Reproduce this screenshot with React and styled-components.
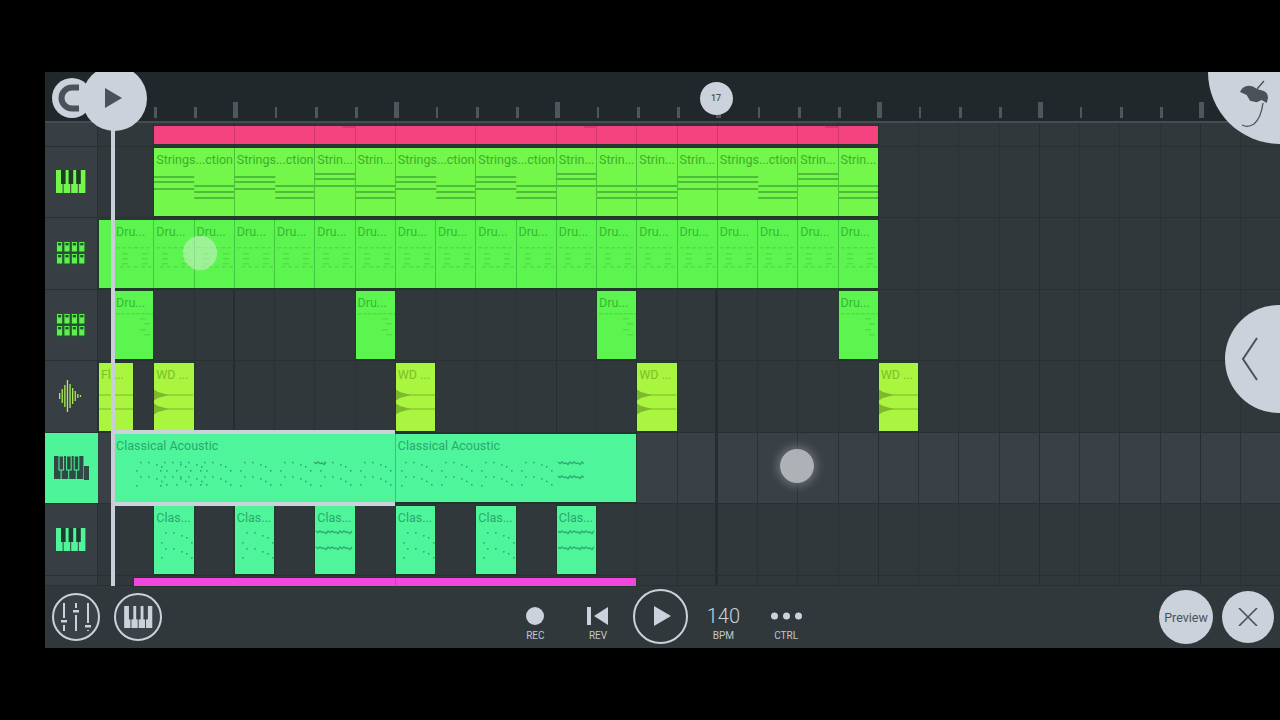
import React from 'react';
import styled, { createGlobalStyle } from 'styled-components';

const BEAT = 40.25;
const ORIGIN = 15;
const CHROME = '#cbd2db';
const INK = '#4a5158';

const GlobalStyle = createGlobalStyle`
  html, body {
    margin: 0;
    height: 100%;
    overflow: hidden;
    background: #000;
    font-family: Roboto, "Liberation Sans", sans-serif;
  }
`;

const Frame = styled.div`
  position: relative;
  display: flex;
  flex-direction: column;
  width: 1235px;
  height: 576px;
  margin: 72px 0 0 45px;
  overflow: hidden;
  background: #30383c;
`;

const Ruler = styled.header`
  display: flex;
  align-items: flex-end;
  box-sizing: border-box;
  height: 51px;
  padding: 0 0 3px 108px;
  background: #20282c;
  border-bottom: 2px solid #454d52;
`;

const Tick = styled.span`
  flex: 0 0 ${BEAT}px;
  display: block;
  &::before {
    content: '';
    display: block;
    width: ${p => (p.$major ? 5 : 2.5)}px;
    height: ${p => (p.$major ? 16 : 11)}px;
    margin-left: ${p => (p.$major ? -1 : 1)}px;
    background: #4f575c;
  }
`;

const Track = styled.section`
  display: flex;
  flex: 0 0 ${p => p.$height}px;
  height: ${p => p.$height}px;
  box-sizing: border-box;
  border-bottom: 1px solid #283034;
`;

const Cell = styled.div`
  flex: 0 0 53px;
  display: flex;
  align-items: center;
  justify-content: center;
  background: ${p => (p.$active ? '#4df598' : '#373f44')};
  border-right: ${p => (p.$active ? 0 : '1px solid #282f33')};
  box-sizing: border-box;
`;

const Lane = styled.div`
  position: relative;
  flex: 1;
  background-color: ${p => (p.$active ? '#394146' : '#30383c')};
  background-image:
    ${p => (p.$marked ? 'linear-gradient(#262d31, #262d31),' : '')}
    linear-gradient(#262d31, #262d31),
    linear-gradient(#2a3236, #2a3236);
  background-repeat: ${p => (p.$marked ? 'no-repeat, repeat-y, repeat-y' : 'repeat-y')};
  background-size: ${p => (p.$marked ? '2px 100%,' : '')} 1px 100%, 1px 100%;
  background-position: ${p => (p.$marked ? '617px 0,' : '')} 135px 0, ${ORIGIN}px 0;
  background-clip: border-box;
`;

const GridLine = styled.i`
  position: absolute;
  top: 0;
  bottom: 0;
  left: ${p => ORIGIN + p.$beat * BEAT}px;
  width: 1px;
  background: ${p => (p.$major ? '#262d31' : '#2a3236')};
`;

const Clip = styled.div`
  position: absolute;
  top: ${p => p.$top}px;
  left: ${p => ORIGIN + p.$at * BEAT}px;
  width: ${p => p.$len * BEAT}px;
  height: ${p => p.$height}px;
  box-sizing: border-box;
  overflow: hidden;
  z-index: ${p => (p.$selected ? 2 : 1)};
  background: ${p => p.$fill};
  border-left: 1px solid ${p => (p.$joined ? p.$seam : '#1f3a28')};
  box-shadow: ${p =>
    p.$selected ? `0 -4px 0 ${CHROME}, 0 4px 0 ${CHROME}` : '1px 0 0 #1f3a28, 0 1px 0 #1f3a28, 0 -1px 0 #1f3a28'};
  ${p => p.$selected && 'overflow: visible;'}
`;

const ClipName = styled.span`
  position: relative;
  display: block;
  padding: 5px 0 0 2px;
  font-size: 12.5px;
  line-height: 14px;
  white-space: nowrap;
  overflow: hidden;
  color: ${p => p.$color};
`;

const NotesArt = styled.svg`
  position: absolute;
  left: 0;
  top: 0;
  width: 100%;
  height: 100%;
`;

const Playhead = styled.div`
  position: absolute;
  left: 65.5px;
  top: 0;
  bottom: 62px;
  width: 4.5px;
  z-index: 5;
  background: #c8cfd8;
`;

const Knob = styled.button`
  position: absolute;
  z-index: 6;
  left: ${p => p.$x - p.$size / 2}px;
  top: ${p => p.$y - p.$size / 2}px;
  width: ${p => p.$size}px;
  height: ${p => p.$size}px;
  padding: 0;
  border: 0;
  border-radius: 50%;
  background: ${CHROME};
  color: ${INK};
  font: 500 9px Roboto, sans-serif;
  display: flex;
  align-items: center;
  justify-content: center;
`;

const KnobArt = styled.svg`
  position: absolute;
  left: 0;
  top: 0;
  width: 100%;
  height: 100%;
`;

const Touch = styled.span`
  position: absolute;
  z-index: 6;
  left: ${p => p.$x - 17}px;
  top: ${p => p.$y - 17}px;
  width: 34px;
  height: 34px;
  border-radius: 50%;
  background: ${p => (p.$glow ? 'rgba(200, 203, 208, 0.82)' : 'rgba(220, 240, 220, 0.5)')};
  box-shadow: ${p => (p.$glow ? '0 0 8px 3px rgba(210, 215, 220, 0.3)' : '0 0 2px rgba(255,255,255,.3)')};
`;

const Footer = styled.footer`
  display: flex;
  align-items: center;
  flex: 1;
  padding: 0 6px 0 7px;
  background: #30383c;
`;

const RoundButton = styled.button`
  width: 48px;
  height: 48px;
  margin-right: 14px;
  padding: 0;
  box-sizing: border-box;
  border: 2px solid ${CHROME};
  border-radius: 50%;
  background: #3a4247;
  display: flex;
  align-items: center;
  justify-content: center;
`;

const Transport = styled.div`
  display: grid;
  grid-template-columns: repeat(5, 62.7px);
  margin-left: 328px;
  height: 62px;
`;

const Control = styled.div`
  display: flex;
  flex-direction: column;
  align-items: center;
  padding-top: 18px;
  box-sizing: border-box;
`;

const ControlSlot = styled.div`
  height: 24px;
  display: flex;
  align-items: center;
  justify-content: center;
  color: ${CHROME};
  font-size: 20px;
  font-weight: 300;
`;

const ControlLabel = styled.span`
  margin-top: 2px;
  font-size: 10px;
  line-height: 12px;
  color: #c0c7cf;
`;

const PlayRing = styled.button`
  flex: none;
  width: 55px;
  height: 55px;
  padding: 0;
  box-sizing: border-box;
  border: 2px solid ${CHROME};
  border-radius: 50%;
  background: none;
  display: flex;
  align-items: center;
  justify-content: center;
`;

const ActionGroup = styled.div`
  display: flex;
  align-items: center;
  gap: 9px;
  margin-left: auto;
`;

const ActionButton = styled.button`
  width: ${p => p.$size}px;
  height: ${p => p.$size}px;
  padding: 0;
  border: 0;
  border-radius: 50%;
  background: ${CHROME};
  color: ${INK};
  font: 400 12.5px Roboto, sans-serif;
  display: flex;
  align-items: center;
  justify-content: center;
`;

function PianoIcon({ white, black, outline, width = 30, height = 23 }) {
  return (
    <svg width={width} height={height} viewBox="0 0 30 23">
      {[0, 7.6, 15.2, 22.8].map(x => (
        <rect key={x} x={x} y="0" width="6.6" height="23" fill={white} />
      ))}
      {[5, 12.6, 20.2].map(x => (
        <rect key={x} x={x} y="0" width="4.6" height="14" fill={black} stroke={outline} strokeWidth={outline ? 1 : 0} />
      ))}
    </svg>
  );
}

function PadsIcon() {
  const cells = [];
  for (let row = 0; row < 2; row++) {
    for (let col = 0; col < 4; col++) {
      cells.push(
        <g key={`${row}-${col}`}>
          <rect x={col * 7.4 + 0.5} y={row * 12 + 0.5} width="6.2" height="10.5" fill="#62ee4e" stroke="#1c5a2c" />
          <rect x={col * 7.4 + 2} y={row * 12 + 2} width="3.2" height="2.4" fill="#1c5a2c" />
        </g>
      );
    }
  }
  return (
    <svg width="30" height="24" viewBox="0 0 30 24">
      {cells}
    </svg>
  );
}

function WaveIcon() {
  const bars = [3, 7, 11, 17, 12, 8, 5, 2, 1];
  return (
    <svg width="24" height="32" viewBox="0 0 24 32">
      {bars.map((h, i) => (
        <rect key={i} x={i * 2.6} y={16 - h} width="1.3" height={h * 2} fill="#a8ec52" />
      ))}
    </svg>
  );
}

function MixerIcon() {
  const strips = [
    { x: 7, y: 18 },
    { x: 19, y: 8 },
    { x: 31, y: 23 },
  ];
  return (
    <svg width="38" height="28" viewBox="0 0 38 28">
      {strips.map(s => (
        <g key={s.x} fill={CHROME}>
          <rect x={s.x - 1} y="0" width="2" height={s.y - 3} />
          <rect x={s.x - 3} y={s.y - 1} width="6" height="2.5" />
          <rect x={s.x - 1} y={s.y + 4} width="2" height={Math.max(0, 24 - s.y)} />
        </g>
      ))}
    </svg>
  );
}

const STRING_SETS = { A: [28, 33, 40], B: [37, 43, 49], C: [25, 30, 37] };

function StringNotes({ sets, len }) {
  const part = (len * BEAT) / sets.length;
  return (
    <NotesArt>
      {sets.flatMap((set, i) =>
        STRING_SETS[set].map(y => <rect key={`${i}-${y}`} x={i * part} y={y} width={part} height="2" fill="#50bd3a" />)
      )}
    </NotesArt>
  );
}

function DrumNotes({ sparse }) {
  const color = '#52df46';
  const marks = [];
  if (sparse) {
    for (let x = 2; x < 38; x += 5) marks.push([x, 22, 4, 1.5]);
    [27, 32, 38, 43].forEach((y, i) => marks.push([i % 2 ? 30 : 26, y, 6, 1.5]));
  } else {
    for (let x = 2; x < 38; x += 6) marks.push([x, 27, 4, 1.5]);
    [33, 38, 43].forEach(y => {
      marks.push([8, y, 6, 1.5]);
      marks.push([28, y, 6, 1.5]);
    });
    for (let x = 6; x < 38; x += 7) marks.push([x, 46, 4, 1.5]);
  }
  return (
    <NotesArt>
      {marks.map(([x, y, w, h], i) => (
        <rect key={i} x={x} y={y} width={w} height={h} fill={color} />
      ))}
    </NotesArt>
  );
}

function SampleNotes({ plain }) {
  const color = '#7fb82e';
  return (
    <NotesArt>
      {[32, 46].map(y => (
        <g key={y} fill={color}>
          <rect x="0" y={y - 0.5} width="100%" height="1" />
          {!plain && <path d={`M0 ${y - 5.5} L4 ${y - 3} L15 ${y} L4 ${y + 3} L0 ${y + 5.5} Z`} />}
        </g>
      ))}
    </NotesArt>
  );
}

const PHRASE = [
  [0, 36], [4, 27.7], [12, 27.7], [20, 30], [25, 32], [30, 36], [40, 36], [44, 27.7], [52, 27.7], [60, 30],
  [65, 32], [70, 36], [4, 42], [12, 42], [20, 44], [25, 46.7], [30, 50], [40, 50], [44, 42], [52, 42],
  [60, 44], [65, 46.7], [70, 50], [0, 51],
];
const SHORT_PHRASE = [
  [7, 36], [11, 26], [19, 26], [27, 29], [32, 31], [37, 36], [7, 51], [11, 42], [19, 42], [27, 45], [32, 47], [37, 51],
];
const DOT = '#2fae72';

function Squiggle({ x, y, w }) {
  let d = `M${x} ${y}`;
  for (let i = 2; i <= w; i += 2) d += ` L${x + i} ${y + (i % 4 ? 1.5 : 0) + (i % 12 > 6 ? 1 : 0)}`;
  return <path d={d} fill="none" stroke={DOT} strokeWidth="1.5" />;
}

function MelodyNotes({ phrases, wavy, short }) {
  const source = short ? SHORT_PHRASE : PHRASE;
  return (
    <NotesArt>
      {phrases.flatMap(start =>
        source.map(([x, y], i) => <rect key={`${start}-${i}`} x={start + x} y={y} width="1.6" height="1.6" fill={DOT} />)
      )}
      {(wavy || []).map(([x, y, w]) => (
        <Squiggle key={`${x}-${y}`} x={x} y={y} w={w} />
      ))}
    </NotesArt>
  );
}

function PinkNotch() {
  return (
    <NotesArt>
      <rect x="27" y="0" width="13" height="2" fill="#d63a6f" />
    </NotesArt>
  );
}

const LONG = 'Strings...ction';
const SHORT = 'Strin...';
const stringClips = [
  [1, 2, LONG, ['A', 'B']],
  [3, 2, LONG, ['A', 'B']],
  [5, 1, SHORT, ['C']],
  [6, 1, SHORT, ['B']],
  [7, 2, LONG, ['A', 'B']],
  [9, 2, LONG, ['A', 'B']],
  [11, 1, SHORT, ['C']],
  [12, 1, SHORT, ['B']],
  [13, 1, SHORT, ['B']],
  [14, 1, SHORT, ['A']],
  [15, 2, LONG, ['A', 'B']],
  [17, 1, SHORT, ['C']],
  [18, 1, SHORT, ['B']],
];

const GREEN = { fill: '#72f74a', seam: '#4cc23a', text: '#3fae2c' };
const DRUM = { fill: '#5cf54f', seam: '#45c840', text: '#38b834' };
const LIME = { fill: '#a9f53f', seam: '#7fc02e', text: '#7ec02c' };
const TEAL = { fill: '#4ff59a', seam: '#36c67a', text: '#2aa870' };
const PINK = { fill: '#f5437f', seam: '#d23a6e', text: '#f5437f' };
const MAGENTA = { fill: '#f247dd', seam: '#d03cc0', text: '#f247dd' };

const tracks = [
  {
    id: 'pink',
    height: 23.5,
    clipTop: 2.5,
    clipHeight: 18,
    palette: PINK,
    clips: stringClips.map(([at, len, , sets]) => ({ at, len, art: sets[0] === 'C' ? <PinkNotch /> : null })),
  },
  {
    id: 'strings',
    icon: <PianoIcon white="#72f74a" black="#1f3a28" />,
    palette: GREEN,
    clips: stringClips.map(([at, len, name, sets]) => ({ at, len, name, art: <StringNotes sets={sets} len={len} /> })),
  },
  {
    id: 'drums',
    icon: <PadsIcon />,
    palette: DRUM,
    clips: [
      { at: -0.375, len: 0.375 },
      ...Array.from({ length: 19 }, (_, i) => ({ at: i, len: 1, name: 'Dru...', art: <DrumNotes /> })),
    ],
  },
  {
    id: 'drums2',
    icon: <PadsIcon />,
    palette: DRUM,
    marked: true,
    clips: [0, 6, 12, 18].map(at => ({ at, len: 1, name: 'Dru...', art: <DrumNotes sparse /> })),
  },
  {
    id: 'samples',
    icon: <WaveIcon />,
    palette: LIME,
    marked: true,
    clips: [
      { at: -0.375, len: 0.875, name: 'Fl ...', art: <SampleNotes plain /> },
      ...[1, 7, 13, 19].map(at => ({ at, len: 1, name: 'WD ...', art: <SampleNotes /> })),
    ],
  },
  {
    id: 'classical',
    active: true,
    marked: true,
    icon: (
      <>
        <PianoIcon white="#2f4a44" black="#2f4a44" outline="#4df598" />
        <SelectedTab />
      </>
    ),
    palette: TEAL,
    clips: [
      {
        at: 0,
        len: 7,
        name: 'Classical Acoustic',
        selected: true,
        art: <MelodyNotes phrases={[22, 46, 126, 206]} wavy={[[200, 28, 12]]} />,
      },
      {
        at: 7,
        len: 6,
        name: 'Classical Acoustic',
        art: <MelodyNotes phrases={[5, 85]} wavy={[[162, 28, 26], [162, 42, 26]]} />,
      },
    ],
  },
  {
    id: 'classical2',
    icon: <PianoIcon white="#4ff59a" black="#1f3a30" />,
    palette: TEAL,
    marked: true,
    clips: [1, 3, 5, 7, 9, 11].map((at, i) => ({
      at,
      len: 1,
      name: 'Clas...',
      art:
        i === 2 || i === 5 ? (
          <MelodyNotes phrases={[]} short wavy={[[1, 25, 36], [1, 41, 36]]} />
        ) : (
          <MelodyNotes phrases={[0]} short />
        ),
    })),
  },
  {
    id: 'magenta',
    height: 10.5,
    clipTop: 2.5,
    clipHeight: 8,
    palette: MAGENTA,
    marked: true,
    clips: [
      { at: 0.5, len: 6.5 },
      { at: 7, len: 6 },
    ],
  },
];

function SelectedTab() {
  return (
    <svg width="5" height="14" viewBox="0 0 5 14" style={{ marginTop: 10 }}>
      <rect width="5" height="14" fill="#2f4a44" />
    </svg>
  );
}

function TrackRow({ track }) {
  const { height = 71.5, clipTop = 1.5, clipHeight = 68, palette } = track;
  const gridLines = Array.from({ length: 29 }, (_, i) => i);
  return (
    <Track $height={height}>
      <Cell $active={track.active}>{track.icon}</Cell>
      <Lane $active={track.active} $marked={track.marked}>
        {gridLines.map(i => (
          <GridLine key={i} $beat={i} $major={(i - 3) % 4 === 0} />
        ))}
        {track.clips.map((clip, i) => {
          const prev = track.clips[i - 1];
          return (
            <Clip
              key={clip.at}
              $at={clip.at}
              $len={clip.len}
              $top={clipTop}
              $height={clipHeight}
              $fill={palette.fill}
              $seam={palette.seam}
              $joined={prev && prev.at + prev.len === clip.at}
              $selected={clip.selected}
            >
              {clip.art}
              {clip.name && <ClipName $color={palette.text}>{clip.name}</ClipName>}
            </Clip>
          );
        })}
      </Lane>
    </Track>
  );
}

export default function App() {
  const ticks = Array.from({ length: 28 }, (_, i) => i);
  return (
    <Frame>
      <GlobalStyle />
      <Ruler>
        {ticks.map(i => (
          <Tick key={i} $major={i % 4 === 2} />
        ))}
      </Ruler>

      {tracks.map(track => (
        <TrackRow key={track.id} track={track} />
      ))}

      <Footer>
        <RoundButton>
          <MixerIcon />
        </RoundButton>
        <RoundButton>
          <PianoIcon white={CHROME} black="#3a4247" width={29} height={22} />
        </RoundButton>
        <Transport>
          <Control>
            <ControlSlot>
              <svg width="18" height="18" viewBox="0 0 18 18">
                <circle cx="9" cy="9" r="9" fill={CHROME} />
              </svg>
            </ControlSlot>
            <ControlLabel>REC</ControlLabel>
          </Control>
          <Control>
            <ControlSlot>
              <svg width="22" height="18" viewBox="0 0 22 18">
                <rect width="4" height="18" fill={CHROME} />
                <path d="M21 0V18L7 9Z" fill={CHROME} />
              </svg>
            </ControlSlot>
            <ControlLabel>REV</ControlLabel>
          </Control>
          <Control>
            <ControlSlot>
              <PlayRing>
                <svg width="18" height="20" viewBox="0 0 18 20" style={{ marginLeft: 4 }}>
                  <path d="M0 0L17 10L0 20Z" fill={CHROME} />
                </svg>
              </PlayRing>
            </ControlSlot>
          </Control>
          <Control>
            <ControlSlot>140</ControlSlot>
            <ControlLabel>BPM</ControlLabel>
          </Control>
          <Control>
            <ControlSlot>
              <svg width="31" height="8" viewBox="0 0 31 8">
                {[3.5, 15.5, 27.5].map(cx => (
                  <circle key={cx} cx={cx} cy="4" r="3.5" fill={CHROME} />
                ))}
              </svg>
            </ControlSlot>
            <ControlLabel>CTRL</ControlLabel>
          </Control>
        </Transport>
        <ActionGroup>
          <ActionButton $size={54}>Preview</ActionButton>
          <ActionButton $size={52}>
            <svg width="20" height="18" viewBox="0 0 20 18">
              <path d="M1 0L19 18M19 0L1 18" stroke={INK} strokeWidth="1.6" fill="none" />
            </svg>
          </ActionButton>
        </ActionGroup>
      </Footer>

      <Playhead />

      <Knob $x={27} $y={26} $size={40}>
        <KnobArt viewBox="0 0 40 40">
          <path d="M27 9.5H20A10.5 10.5 0 0 0 20 30.5H27" fill="none" stroke={INK} strokeWidth="6" />
        </KnobArt>
      </Knob>
      <Knob $x={69} $y={26} $size={65}>
        <svg width="18" height="20" viewBox="0 0 18 20">
          <path d="M0 0L17 10L0 20Z" fill={INK} />
        </svg>
      </Knob>
      <Knob $x={671} $y={26} $size={33}>
        17
      </Knob>
      <Knob $x={1235} $y={0} $size={144}>
        <KnobArt viewBox="0 0 144 144">
          <path
            d="M32 92Q34 87 39 86Q44 85 49 89L55 90.7Q60 92 60 98L58.7 103L53.7 100L48.7 102.3L42 100.7L38.7 95Z"
            fill={INK}
          />
          <path d="M49 89L56 81M55 103Q53 118 46 124Q40 128 34 125" fill="none" stroke={INK} strokeWidth="1.3" />
        </KnobArt>
      </Knob>
      <Knob $x={1234} $y={287} $size={108}>
        <KnobArt viewBox="0 0 108 108">
          <path d="M32 33L18 54L32 75" fill="none" stroke={INK} strokeWidth="2" />
        </KnobArt>
      </Knob>

      <Touch $x={155} $y={181} />
      <Touch $x={752} $y={394} $glow />
    </Frame>
  );
}
